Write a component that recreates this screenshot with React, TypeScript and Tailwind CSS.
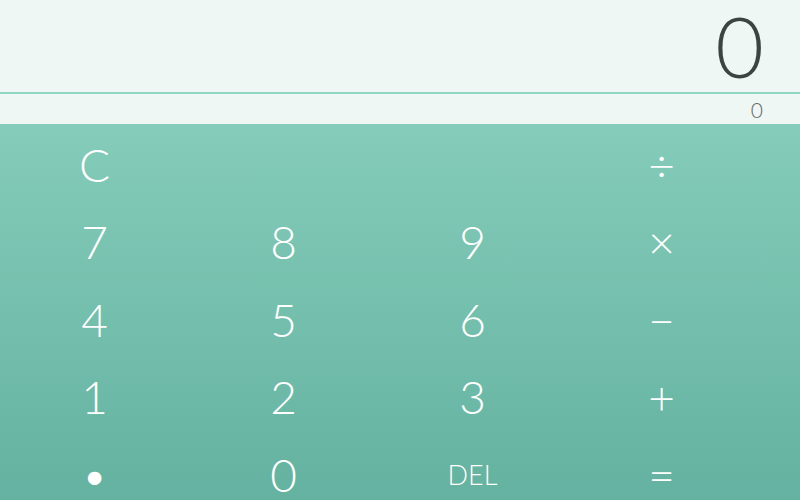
import React from 'react';

const keys = [
  'C', '', '', '÷',
  '7', '8', '9', '×',
  '4', '5', '6', '−',
  '1', '2', '3', '+',
  '•', '0', 'DEL', '=',
];

function App() {
  return (
    <div className="w-[800px] h-[500px] overflow-hidden bg-[#eff7f4] font-['Lato',sans-serif] font-light">
      <div className="h-[92px] flex items-center justify-end pr-[36px] text-[84px] leading-none text-[#3c4442]">
        0
      </div>
      <div className="h-[2px] bg-[#8fd6c3]" />
      <div className="h-[30px] flex items-center justify-end pr-[37px] text-[21px] leading-none text-[#666]">
        0
      </div>
      <div className="h-[400px] bg-gradient-to-b from-[#85ccba] to-[#62b09f] pt-[2px]">
        <div className="grid grid-cols-[repeat(4,189px)] auto-rows-[77.5px] text-white">
          {keys.map((k, i) => (
            <div
              key={i}
              className={
                'flex items-center justify-center leading-none ' +
                (k === 'DEL' ? 'text-[27px]' : 'text-[46px]')
              }
            >
              {k}
            </div>
          ))}
        </div>
      </div>
    </div>
  );
}

export default App;
